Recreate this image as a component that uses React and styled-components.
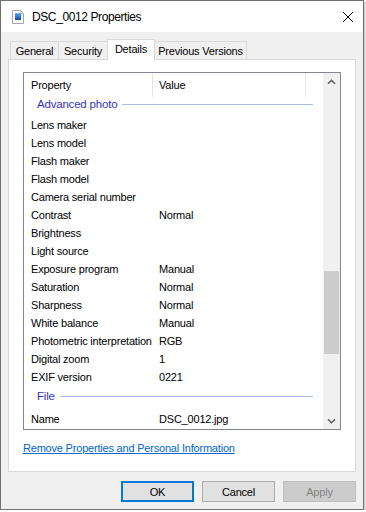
import React from "react";
import styled, { createGlobalStyle } from "styled-components";

const GlobalStyle = createGlobalStyle`
  html, body {
    margin: 0;
    padding: 0;
    background: #fff;
  }
  body {
    font-family: "Liberation Sans", Arial, sans-serif;
    font-size: 11px;
    letter-spacing: -0.2px;
    color: #000;
  }
`;

const Window = styled.div`
  width: 364px;
  height: 510px;
  box-sizing: border-box;
  border: 1px solid #707070;
  box-shadow: 1px 1px 2px rgba(0, 0, 0, 0.3);
  display: flex;
  flex-direction: column;
  background: #f0f0f0;
`;

const TitleBar = styled.div`
  height: 31px;
  flex-shrink: 0;
  background: #fff;
  display: flex;
  align-items: center;
  padding: 0 10px 0 11px;
`;

const Title = styled.div`
  flex: 1;
  margin-left: 8px;
  font-size: 12px;
  letter-spacing: -0.4px;
`;

const Body = styled.div`
  flex: 1;
  display: flex;
  flex-direction: column;
  padding: 7px;
`;

const TabStrip = styled.div`
  height: 20px;
  flex-shrink: 0;
  display: flex;
  align-items: flex-end;
  padding-left: 2px;
`;

const Tab = styled.div`
  position: relative;
  z-index: ${(p) => (p.$active ? 2 : 1)};
  box-sizing: border-box;
  width: ${(p) => p.$w}px;
  height: ${(p) => (p.$active ? 21 : 18)}px;
  margin-bottom: ${(p) => (p.$active ? -1 : 0)}px;
  margin-left: -1px;
  padding-bottom: ${(p) => (p.$active ? 2 : 0)}px;
  border: 1px solid #d9d9d9;
  border-bottom: none;
  background: ${(p) => (p.$active ? "#fff" : "#f0f0f0")};
  display: flex;
  align-items: center;
  justify-content: center;
  white-space: nowrap;

  &:first-child {
    margin-left: 0;
  }
`;

const Panel = styled.div`
  height: 413px;
  flex-shrink: 0;
  box-sizing: border-box;
  border: 1px solid #d9d9d9;
  background: #fff;
  padding: 12px 14px 0;
  display: flex;
  flex-direction: column;
`;

const ListView = styled.div`
  height: 358px;
  flex-shrink: 0;
  box-sizing: border-box;
  border: 1px solid #828790;
  display: flex;
  background: #fff;
`;

const Content = styled.div`
  flex: 1;
  display: flex;
  flex-direction: column;
  overflow: hidden;
`;

const Header = styled.div`
  height: 24px;
  flex-shrink: 0;
  display: flex;
`;

const HeaderCell = styled.div`
  width: ${(p) => p.$w}px;
  box-sizing: border-box;
  border-right: 1px solid #e5e5e5;
  padding-left: ${(p) => p.$pad}px;
  display: flex;
  align-items: center;
`;

const Row = styled.div`
  height: 18px;
  flex-shrink: 0;
  display: flex;
  align-items: center;
  white-space: nowrap;
`;

const NameCell = styled.div`
  width: 128px;
  flex-shrink: 0;
  padding-left: 7px;
  box-sizing: border-box;
`;

const ValueCell = styled.div`
  padding-left: 7px;
`;

const GroupHeader = styled.div`
  height: ${(p) => p.$h}px;
  flex-shrink: 0;
  box-sizing: border-box;
  padding: ${(p) => p.$top}px 10px 0 13px;
  display: flex;
  align-items: flex-start;
`;

const GroupTitle = styled.span`
  line-height: 14px;
  color: #3434c0;
  font-size: 11.5px;
`;

const GroupLine = styled.div`
  flex: 1;
  height: 1px;
  margin: 7px 0 0 5px;
  background: #a9bde6;
`;

const Scrollbar = styled.div`
  width: 17px;
  flex-shrink: 0;
  background: #f0f0f0;
  display: flex;
  flex-direction: column;
`;

const ScrollButton = styled.div`
  height: 17px;
  flex-shrink: 0;
  display: flex;
  align-items: center;
  justify-content: center;
`;

const Track = styled.div`
  flex: 1;
`;

const Thumb = styled.div`
  height: 83px;
  margin: 0 1px;
  background: #cdcdcd;
`;

const Link = styled.a`
  align-self: flex-start;
  margin-top: 11px;
  line-height: 14px;
  color: #0066cc;
  text-decoration: underline;
  cursor: pointer;
`;

const ButtonRow = styled.div`
  margin-top: 9px;
  display: flex;
  justify-content: flex-end;
  gap: 8px;
`;

const Button = styled.button`
  width: 73px;
  height: 21px;
  box-sizing: border-box;
  padding: 0;
  font: inherit;
  letter-spacing: inherit;
  background: ${(p) => (p.disabled ? "#cccccc" : "#e1e1e1")};
  color: ${(p) => (p.disabled ? "#838383" : "#000")};
  border: ${(p) =>
    p.$primary
      ? "2px solid #0078d7"
      : `1px solid ${p.disabled ? "#bfbfbf" : "#adadad"}`};
`;

const rows = [
  ["Lens maker", ""],
  ["Lens model", ""],
  ["Flash maker", ""],
  ["Flash model", ""],
  ["Camera serial number", ""],
  ["Contrast", "Normal"],
  ["Brightness", ""],
  ["Light source", ""],
  ["Exposure program", "Manual"],
  ["Saturation", "Normal"],
  ["Sharpness", "Normal"],
  ["White balance", "Manual"],
  ["Photometric interpretation", "RGB"],
  ["Digital zoom", "1"],
  ["EXIF version", "0221"],
];

const tabs = [
  { label: "General", w: 49 },
  { label: "Security", w: 50 },
  { label: "Details", w: 48, active: true },
  { label: "Previous Versions", w: 93 },
];

const FileIcon = () => (
  <svg width="12" height="14" viewBox="0 0 12 14">
    <defs>
      <linearGradient id="pic" x1="0" y1="0" x2="0" y2="1">
        <stop offset="0" stopColor="#5db3f5" />
        <stop offset="0.6" stopColor="#1f72cc" />
        <stop offset="1" stopColor="#174f8e" />
      </linearGradient>
    </defs>
    <path d="M0.5 0.5H8.5L11.5 3.5V13.5H0.5Z" fill="#fff" stroke="#a6a6a6" />
    <path d="M8.5 0.5V3.5H11.5" fill="none" stroke="#c4c4c4" />
    <rect x="3" y="3" width="6" height="7" fill="url(#pic)" />
  </svg>
);

const CloseIcon = () => (
  <svg width="10" height="10" viewBox="0 0 10 10">
    <path d="M0 0L10 10M10 0L0 10" stroke="#000" strokeWidth="1" />
  </svg>
);

const Chevron = ({ down }) => (
  <svg width="9" height="6" viewBox="0 0 9 6">
    <path
      d={down ? "M1 1.2L4.5 4.7L8 1.2" : "M1 4.8L4.5 1.3L8 4.8"}
      fill="none"
      stroke="#606060"
      strokeWidth="1.6"
    />
  </svg>
);

const App = () => {
  // list is scrolled: thumb offset in the track
  const thumbTop = 181;

  return (
    <>
      <GlobalStyle />
      <Window>
        <TitleBar>
          <FileIcon />
          <Title>DSC_0012 Properties</Title>
          <CloseIcon />
        </TitleBar>
        <Body>
          <TabStrip>
            {tabs.map((t) => (
              <Tab key={t.label} $w={t.w} $active={t.active}>
                {t.label}
              </Tab>
            ))}
          </TabStrip>
          <Panel>
            <ListView>
              <Content>
                <Header>
                  <HeaderCell $w={129} $pad={7}>
                    Property
                  </HeaderCell>
                  <HeaderCell $w={153} $pad={6}>
                    Value
                  </HeaderCell>
                </Header>
                <GroupHeader $h={19} $top={0}>
                  <GroupTitle>Advanced photo</GroupTitle>
                  <GroupLine />
                </GroupHeader>
                {rows.map(([name, value]) => (
                  <Row key={name}>
                    <NameCell>{name}</NameCell>
                    <ValueCell>{value}</ValueCell>
                  </Row>
                ))}
                <GroupHeader $h={24} $top={3}>
                  <GroupTitle>File</GroupTitle>
                  <GroupLine />
                </GroupHeader>
                <Row>
                  <NameCell>Name</NameCell>
                  <ValueCell>DSC_0012.jpg</ValueCell>
                </Row>
              </Content>
              <Scrollbar>
                <ScrollButton>
                  <Chevron />
                </ScrollButton>
                <Track>
                  <Thumb style={{ marginTop: thumbTop }} />
                </Track>
                <ScrollButton>
                  <Chevron down />
                </ScrollButton>
              </Scrollbar>
            </ListView>
            <Link>Remove Properties and Personal Information</Link>
          </Panel>
          <ButtonRow>
            <Button $primary>OK</Button>
            <Button>Cancel</Button>
            <Button disabled>Apply</Button>
          </ButtonRow>
        </Body>
      </Window>
    </>
  );
};

export default App;
